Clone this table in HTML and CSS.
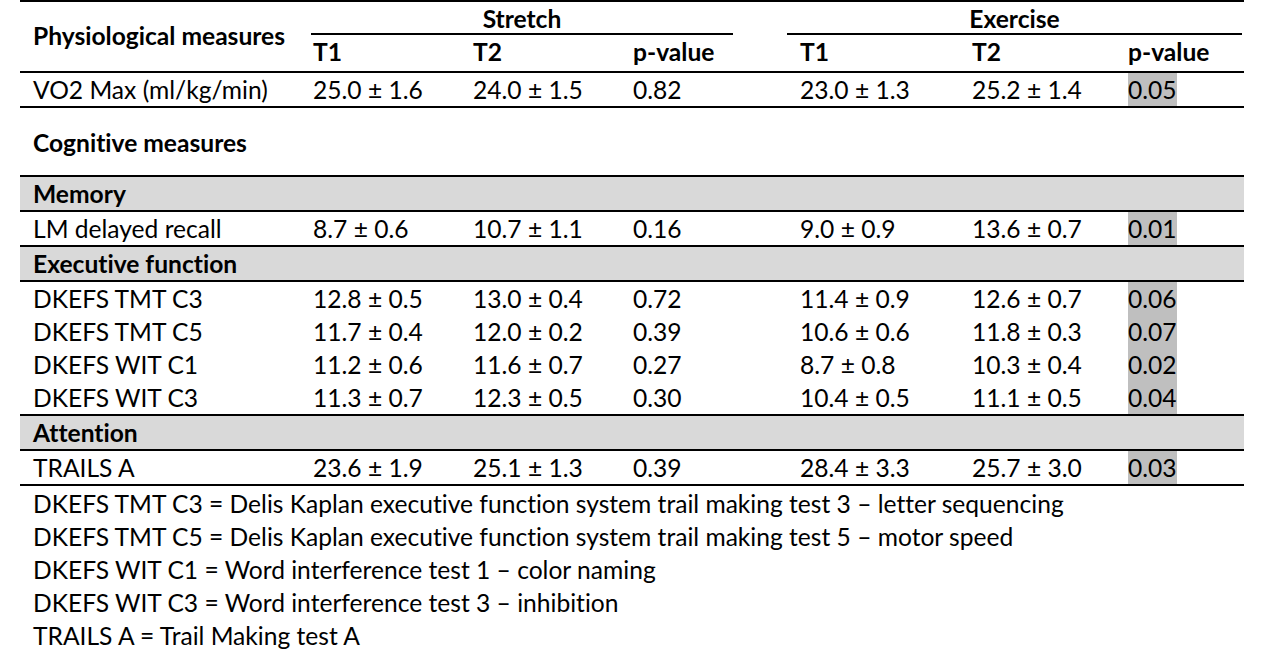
FILE: index.html
```html
<!DOCTYPE html>
<html lang="en">
<head>
<meta charset="utf-8">
<title>Physiological and cognitive measures</title>
<link rel="stylesheet" href="styles.css">
</head>
<body>
<div class="page">
  <div class="table">
    <div class="thead">
      <div class="th-label">Physiological measures</div>
      <div class="th-right">
        <div class="groups">
          <div class="group stretch">Stretch</div>
          <div class="group exercise">Exercise</div>
        </div>
        <div class="cols sub">
          <div class="c">T1</div><div class="c">T2</div><div class="c">p-value</div>
          <div class="c">T1</div><div class="c">T2</div><div class="c">p-value</div>
        </div>
      </div>
    </div>
    <div class="row rule">
      <div class="lbl">VO2 Max (ml/kg/min)</div>
      <div class="c">25.0 ± 1.6</div><div class="c">24.0 ± 1.5</div><div class="c">0.82</div>
      <div class="c">23.0 ± 1.3</div><div class="c">25.2 ± 1.4</div><div class="c"><span class="hl">0.05</span></div>
    </div>
    <div class="section rule">Cognitive measures</div>
    <div class="band rule">Memory</div>
    <div class="row rule">
      <div class="lbl">LM delayed recall</div>
      <div class="c">8.7 ± 0.6</div><div class="c">10.7 ± 1.1</div><div class="c">0.16</div>
      <div class="c">9.0 ± 0.9</div><div class="c">13.6 ± 0.7</div><div class="c"><span class="hl">0.01</span></div>
    </div>
    <div class="band rule">Executive function</div>
    <div class="row rule">
      <div class="lbl">DKEFS TMT C3</div>
      <div class="c">12.8 ± 0.5</div><div class="c">13.0 ± 0.4</div><div class="c">0.72</div>
      <div class="c">11.4 ± 0.9</div><div class="c">12.6 ± 0.7</div><div class="c"><span class="hl">0.06</span></div>
    </div>
    <div class="row">
      <div class="lbl">DKEFS TMT C5</div>
      <div class="c">11.7 ± 0.4</div><div class="c">12.0 ± 0.2</div><div class="c">0.39</div>
      <div class="c">10.6 ± 0.6</div><div class="c">11.8 ± 0.3</div><div class="c"><span class="hl">0.07</span></div>
    </div>
    <div class="row">
      <div class="lbl">DKEFS WIT C1</div>
      <div class="c">11.2 ± 0.6</div><div class="c">11.6 ± 0.7</div><div class="c">0.27</div>
      <div class="c">8.7 ± 0.8</div><div class="c">10.3 ± 0.4</div><div class="c"><span class="hl">0.02</span></div>
    </div>
    <div class="row">
      <div class="lbl">DKEFS WIT C3</div>
      <div class="c">11.3 ± 0.7</div><div class="c">12.3 ± 0.5</div><div class="c">0.30</div>
      <div class="c">10.4 ± 0.5</div><div class="c">11.1 ± 0.5</div><div class="c"><span class="hl">0.04</span></div>
    </div>
    <div class="band rule">Attention</div>
    <div class="row rule last">
      <div class="lbl">TRAILS A</div>
      <div class="c">23.6 ± 1.9</div><div class="c">25.1 ± 1.3</div><div class="c">0.39</div>
      <div class="c">28.4 ± 3.3</div><div class="c">25.7 ± 3.0</div><div class="c"><span class="hl">0.03</span></div>
    </div>
  </div>
  <div class="notes">
    <p>DKEFS TMT C3 = Delis Kaplan executive function system trail making test 3 – letter sequencing</p>
    <p>DKEFS TMT C5 = Delis Kaplan executive function system trail making test 5 – motor speed</p>
    <p>DKEFS WIT C1 = Word interference test 1 – color naming</p>
    <p>DKEFS WIT C3 = Word interference test 3 – inhibition</p>
    <p>TRAILS A = Trail Making test A</p>
  </div>
</div>
</body>
</html>
```

FILE: styles.css
```css
html, body {
  margin: 0;
  padding: 0;
  background: #ffffff;
}

body {
  font-family: "Lato", "Liberation Sans", sans-serif;
  font-size: 24.6px;
  font-variant-ligatures: none;
  color: #000000;
}

.page {
  padding-left: 20px;
  width: 1224px;
}

.table {
  border-top: 2px solid #000;
}

.thead {
  display: flex;
  height: 69px;
}

.th-label {
  width: 272px;
  padding-left: 13px;
  padding-bottom: 2px;
  font-weight: 700;
  display: flex;
  align-items: center;
  white-space: nowrap;
}

.th-right {
  display: flex;
  flex-direction: column;
  flex: 1;
}

.groups {
  display: flex;
  height: 33px;
  margin-left: 6px;
}

.group {
  font-weight: 700;
  text-align: center;
  line-height: 33px;
  border-bottom: 2px solid #000;
}

.group.stretch {
  width: 422px;
}

.group.exercise {
  width: 455px;
  margin-left: 54px;
}

.cols {
  display: grid;
  grid-template-columns: 160px 160px 167px 172px 156px 124px;
}

.sub {
  height: 34px;
  line-height: 34px;
  font-weight: 700;
}

.row {
  display: grid;
  grid-template-columns: 285px 160px 160px 167px 172px 156px 124px;
  height: 33px;
  line-height: 33px;
}

.rule {
  border-top: 2px solid #000;
}

.last {
  border-bottom: 2px solid #000;
}

.lbl {
  padding-left: 13px;
  white-space: nowrap;
}

.c {
  padding-left: 8px;
  white-space: nowrap;
}

.hl {
  display: inline-block;
  background: #bfbfbf;
  height: 33px;
}

.section {
  font-weight: 700;
  padding: 18px 0 16px 13px;
  line-height: 33px;
}

.band {
  background: #d9d9d9;
  font-weight: 700;
  padding-left: 13px;
  height: 33px;
  line-height: 33px;
}

.notes {
  padding-top: 1px;
}

.notes p {
  margin: 0;
  padding-left: 13px;
  line-height: 33px;
  white-space: nowrap;
}
```
